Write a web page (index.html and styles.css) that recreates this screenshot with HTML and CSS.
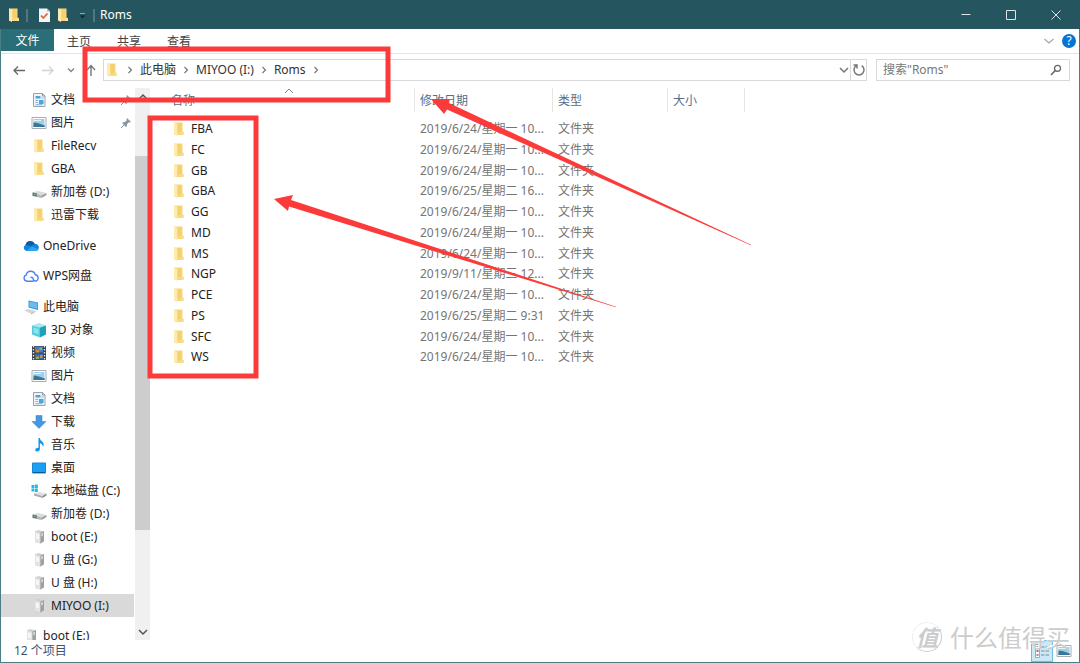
FILE: index.html
```
<!DOCTYPE html>
<html lang="zh-CN">
<head>
<meta charset="utf-8">
<title>Roms</title>
<link rel="stylesheet" href="styles.css">
</head>
<body>
<svg class="sprite" aria-hidden="true">
  <symbol id="folder" viewBox="0 0 16 16">
    <path d="M3 1.500h8.500v9l1.500.8v2.700H5L3 13.200z" fill="#f8d97f"/>
    <path d="M3 1.500 6 3v12L3 13.400z" fill="#fdebb0"/>
    <path d="M7 2h3.500v9H7z" fill="#f4d06e"/>
    <path d="M11 11.500h2V14h-2z" fill="#fbe29a"/>
  </symbol>
  <symbol id="doc" viewBox="0 0 16 16">
    <path d="M2.500 1.500h9l2.500 2.500v10.500H2.500z" fill="#f1f4f6" stroke="#9aa3a9"/>
    <path d="M11.500 1.500V4H14" fill="none" stroke="#8d979e"/>
    <path d="M4.500 4h5v2.500h-5zM8 8h4.500v4H8z" fill="#4ba6dc"/>
    <path d="M4.500 8.500h2.500M4.500 10.500h2.500M4.500 12.700h7M10.500 6h2" stroke="#7ab6dc"/>
  </symbol>
  <symbol id="picture" viewBox="0 0 16 16">
    <path d="M1 2.500h14v11H1z" fill="#fff" stroke="#a8aeb3"/>
    <path d="M2.500 4h11v8h-11z" fill="#9ccff0"/>
    <path d="M2.500 7.500q4 0 11 3V12h-11z" fill="#3d7a78"/>
    <path d="M2.500 10.500h11V12h-11z" fill="#3a72ae"/>
    <path d="M3 5.500h7" stroke="#e4f3fc"/>
  </symbol>
  <symbol id="drive" viewBox="0 0 16 16">
    <path d="M1 8.500 7 7l8.500 2-5 2.500z" fill="#dadbdc"/>
    <path d="M1 8.500V12l9.500 2v-2.500z" fill="#b4b7b9"/>
    <path d="M10.500 11.500V14l5-3V9z" fill="#989c9f"/>
    <path d="M2 8.500 6 9.400v3.100l-4-.8z" fill="#5d7580"/>
    <path d="M3 9.500h1.500V11H3z" fill="#69c27b"/>
    <path d="M4.500 10.500H6V12H4.500z" fill="#c5695b"/>
  </symbol>
  <symbol id="sysdrive" viewBox="0 0 16 16">
    <path d="M3 10.500 8 9l7.500 1.500-4 2.500z" fill="#dedfe0"/>
    <path d="M3 10.500v2l8.500 2.500v-2z" fill="#a8abad"/>
    <path d="M11.500 13v2l4-2.500v-2z" fill="#85898c"/>
    <path d="M.5 2h2.700v3H.5zM3.800 1.500h3V5h-3zM.5 5.600h2.700v3H.5zM3.800 5.600h3V9h-3z" fill="#1fb8ec"/>
  </symbol>
  <symbol id="usb" viewBox="0 0 16 16">
    <path d="M4 2.500 7 1.500l6 .8v10L9.500 14.500 4 13z" fill="#b2b5b7"/>
    <path d="M4 2.500 9.500 3.700v10.800L4 13z" fill="#e2e3e4"/>
    <path d="M4 2.500 7 1.500l6 .8-3.500 1.400z" fill="#cfd1d2"/>
    <path d="M9.500 3.700v10.800L13 12.300v-10z" fill="#9da1a3"/>
    <path d="M5 4.500 8 5.200v5L5 9.500z" fill="#f6f6f6"/>
    <path d="M10.200 4.500 12 3.800v3l-1.800.7z" fill="#d3d5d6"/>
  </symbol>
  <symbol id="onedrive" viewBox="0 0 16 16">
    <path d="M3.500 13A3.200 3.200 0 0 1 2.500 7Q3.500 3 7.500 3q2.700 0 4.200 2.700 3.300 0 4.100 3 .3 3.600-2.800 4.300z" fill="#1684d8"/>
    <path d="M2.500 7Q3.500 3 7.500 3q2.700 0 4.200 2.700L8 8z" fill="#0a5cab"/>
    <path d="M3.500 13 9 8.500l6.500 2.700Q14.500 13 13 13z" fill="#28a8ea"/>
  </symbol>
  <symbol id="wps" viewBox="0 0 16 16">
    <path d="M10 13.200H4A3.200 3.200 0 0 1 3.200 7a4.600 4.600 0 0 1 9-.3 3.300 3.300 0 0 1 1 6.300q-2.500.5-3-2-.2-1.700-2.200-1.700" fill="none" stroke="#4c83ee" stroke-width="1.400" stroke-linecap="round"/>
  </symbol>
  <symbol id="pc" viewBox="0 0 16 16">
    <path d="m5.500 1.500 9.500 2v7.500L5.500 8.500z" fill="#3c92cc"/>
    <path d="m6.300 2.500 8 1.700v5.600l-8-2z" fill="#68bdf0"/>
    <path d="M1 11.500 5.500 10l7 2L8 14.500z" fill="#d3d7da"/>
    <path d="m8 14.500 4.500-2.500v.800L8 15.500z" fill="#a0a6aa"/>
  </symbol>
  <symbol id="cube" viewBox="0 0 16 16">
    <path d="m1 3.500 7-2.500 7 2.500L9 5.500z" fill="#a6e9f3"/>
    <path d="m1 3.500 8 2v10L1 12.500z" fill="#55cbdc"/>
    <path d="m9 5.500 6-2v9l-6 3z" fill="#1fa1ba"/>
    <path d="m2.500 5.500 5 1.500v5.500l-5-2z" fill="#8be4ef"/>
  </symbol>
  <symbol id="video" viewBox="0 0 16 16">
    <path d="M1 1h14v14H1z" fill="#3b3f46"/>
    <path d="M2.500 1v14M13.500 1v14" stroke="#e0e2e4" stroke-width="1.400" stroke-dasharray="1.500 1.500"/>
    <path d="M4 1.500h8v6H4z" fill="#427fc8"/>
    <path d="M4 8.500h8v6H4z" fill="#3b67ae"/>
    <path d="M5 5h3v2.500H5zM9 10h2.500v3H9z" fill="#d98838"/>
    <path d="M8.500 2.500h2.500V5H8.500zM5 11.500h3V14H5z" fill="#89b457"/>
  </symbol>
  <symbol id="download" viewBox="0 0 16 16">
    <path d="M5 1.500h6v6h4L8 14.500 1 7.500h4z" fill="#4398e0" stroke="#2f82cc" stroke-width=".5"/>
  </symbol>
  <symbol id="music" viewBox="0 0 16 16">
    <path d="M7.500 1h1.300q.2 2.500 2.800 4 2.200 2.500.2 5 .3-2.700-2.900-3.700V12q-.2 2.500-2.700 2.600-2.200-.2-2-2 .4-2 3.300-1.900z" fill="#0f93ee"/>
  </symbol>
  <symbol id="desktop" viewBox="0 0 16 16">
    <path d="M1.500 3h13v10h-13z" fill="#18a0f4" stroke="#1b86d2"/>
    <path d="M2 12.500h12" stroke="#0d5d9d"/>
  </symbol>
  <symbol id="pin" viewBox="0 0 12 12">
    <path d="M7 1 11 5 9.800 5.500 8.800 5.300 7 7.300 6.800 9.500 6 10 2.300 6.200 3 5.300 5 5 6.800 3.200 6.500 2z" fill="#8a959e"/>
    <path d="M4 8 1 11" stroke="#8a959e"/>
  </symbol>
  <symbol id="right" viewBox="0 0 8 8"><path d="m2.500 1 3 3-3 3" fill="none" stroke="#777" stroke-width="1.200"/></symbol>
  <symbol id="down" viewBox="0 0 12 12"><path d="m2 4 4 4 4-4" fill="none" stroke="currentColor" stroke-width="1.500"/></symbol>
  <symbol id="up" viewBox="0 0 12 12"><path d="m2 8 4-4 4 4" fill="none" stroke="currentColor" stroke-width="1.500"/></symbol>
</svg>

<div class="window">
  <header class="titlebar">
    <svg class="icon title-folder"><use href="#folder"/></svg>
    <span class="divider"></span>
    <button class="quick" aria-label="属性">
      <svg class="icon" viewBox="0 0 16 16"><path d="M3 1.500h8l3 3v10.500H3z" fill="#f5f5f5"/><path d="M11 1.500v3h3z" fill="#b5bcc0"/><path d="m5 8.500 2.300 2.500 4.200-4.500" fill="none" stroke="#e0633d" stroke-width="1.800"/></svg>
    </button>
    <button class="quick" aria-label="新建文件夹"><svg class="icon"><use href="#folder"/></svg></button>
    <button class="quick" aria-label="自定义快速访问工具栏">
      <svg class="icon" viewBox="0 0 16 16"><path d="M6 6.500h5" stroke="#8fa7ac"/><path d="M5.800 8.500h5.400l-2.700 3z" fill="#10272c"/></svg>
    </button>
    <span class="divider"></span>
    <h1 class="title">Roms</h1>
    <div class="caption-buttons">
      <button aria-label="最小化"><svg viewBox="0 0 12 12"><path d="M1.500 5.500h9" stroke="#dbe5e7"/></svg></button>
      <button aria-label="最大化"><svg viewBox="0 0 12 12"><path d="M1.500 1.500h9v9h-9z" fill="none" stroke="#dbe5e7"/></svg></button>
      <button aria-label="关闭"><svg viewBox="0 0 12 12"><path d="m1.500 1.500 9 9m0-9-9 9" stroke="#dbe5e7"/></svg></button>
    </div>
  </header>

  <div class="ribbon">
    <button class="tab tab-file">文件</button>
    <button class="tab">主页</button>
    <button class="tab">共享</button>
    <button class="tab">查看</button>
    <div class="ribbon-tools">
      <button class="ribbon-expand" aria-label="展开功能区"><svg viewBox="0 0 12 12"><path d="m1.500 4 4.500 4 4.500-4" fill="none" stroke="#a6a6a6" stroke-width="1.200"/></svg></button>
      <button class="help" aria-label="帮助">?</button>
    </div>
  </div>

  <div class="toolbar">
    <div class="history">
      <button aria-label="后退"><svg class="arrow" viewBox="0 0 14 14"><path d="M13 7.500H2m4-4L2 7.500l4 4" fill="none" stroke="#666" stroke-width="1.300"/></svg></button>
      <button aria-label="前进"><svg class="arrow" viewBox="0 0 14 14"><path d="M1 7.500h11m-4-4 4 4-4 4" fill="none" stroke="#d2d2d2" stroke-width="1.300"/></svg></button>
      <button class="recent" aria-label="最近浏览的位置"><svg class="small" viewBox="0 0 12 12"><path d="m3 4.500 3 3 3-3" fill="none" stroke="#888" stroke-width="1.500"/></svg></button>
      <button class="parent" aria-label="上移"><svg class="arrow" viewBox="0 0 14 14"><path d="M7 13V3M3 7l4-4.500L11 7" fill="none" stroke="#777" stroke-width="1.400"/></svg></button>
    </div>
    <div class="address">
      <svg class="icon"><use href="#folder"/></svg>
      <svg class="sep"><use href="#right"/></svg>
      <button class="crumb">此电脑</button>
      <svg class="sep"><use href="#right"/></svg>
      <button class="crumb">MIYOO (I:)</button>
      <svg class="sep"><use href="#right"/></svg>
      <button class="crumb">Roms</button>
      <svg class="sep"><use href="#right"/></svg>
      <button class="address-drop" aria-label="以前的位置"><svg class="small"><use href="#down"/></svg></button>
      <button class="refresh" aria-label="刷新"><svg class="arrow" viewBox="0 0 14 14"><path d="M4.300 2.700a5 5 0 1 0 5.400 0M1.500 2h3.500v3.500" fill="none" stroke="#777" stroke-width="1.500"/></svg></button>
    </div>
    <label class="search">
      <input type="text" placeholder='搜索"Roms"' aria-label='搜索"Roms"'>
      <svg class="small" viewBox="0 0 12 12"><circle cx="7.500" cy="4.300" r="3" fill="none" stroke="#666" stroke-width="1.300"/><path d="M5.300 6.500 1 11" stroke="#666" stroke-width="1.600"/></svg>
    </label>
  </div>

  <div class="content">
    <nav class="sidebar" aria-label="导航窗格">
      <div class="group">
        <a class="item" href="#"><svg class="icon"><use href="#doc"/></svg>文档<svg class="pin"><use href="#pin"/></svg></a>
        <a class="item" href="#"><svg class="icon"><use href="#picture"/></svg>图片<svg class="pin"><use href="#pin"/></svg></a>
        <a class="item" href="#"><svg class="icon"><use href="#folder"/></svg>FileRecv</a>
        <a class="item" href="#"><svg class="icon"><use href="#folder"/></svg>GBA</a>
        <a class="item" href="#"><svg class="icon"><use href="#drive"/></svg>新加卷 (D:)</a>
        <a class="item" href="#"><svg class="icon"><use href="#folder"/></svg>迅雷下载</a>
      </div>
      <div class="group">
        <a class="item root" href="#"><svg class="icon"><use href="#onedrive"/></svg>OneDrive</a>
      </div>
      <div class="group tight">
        <a class="item root" href="#"><svg class="icon"><use href="#wps"/></svg>WPS网盘</a>
      </div>
      <div class="group">
        <a class="item root" href="#"><svg class="icon"><use href="#pc"/></svg>此电脑</a>
        <a class="item" href="#"><svg class="icon"><use href="#cube"/></svg>3D 对象</a>
        <a class="item" href="#"><svg class="icon"><use href="#video"/></svg>视频</a>
        <a class="item" href="#"><svg class="icon"><use href="#picture"/></svg>图片</a>
        <a class="item" href="#"><svg class="icon"><use href="#doc"/></svg>文档</a>
        <a class="item" href="#"><svg class="icon"><use href="#download"/></svg>下载</a>
        <a class="item" href="#"><svg class="icon"><use href="#music"/></svg>音乐</a>
        <a class="item" href="#"><svg class="icon"><use href="#desktop"/></svg>桌面</a>
        <a class="item" href="#"><svg class="icon"><use href="#sysdrive"/></svg>本地磁盘 (C:)</a>
        <a class="item" href="#"><svg class="icon"><use href="#drive"/></svg>新加卷 (D:)</a>
        <a class="item" href="#"><svg class="icon"><use href="#usb"/></svg>boot (E:)</a>
        <a class="item" href="#"><svg class="icon"><use href="#usb"/></svg>U 盘 (G:)</a>
        <a class="item" href="#"><svg class="icon"><use href="#usb"/></svg>U 盘 (H:)</a>
        <a class="item selected" href="#"><svg class="icon"><use href="#usb"/></svg>MIYOO (I:)</a>
      </div>
      <div class="group tight">
        <a class="item root" href="#"><svg class="icon"><use href="#usb"/></svg>boot (E:)</a>
      </div>
    </nav>
    <div class="scrollbar">
      <button aria-label="向上滚动"><svg class="small"><use href="#up"/></svg></button>
      <div class="track"><div class="thumb"></div></div>
      <button aria-label="向下滚动"><svg class="small"><use href="#down"/></svg></button>
    </div>
    <main class="files">
      <table>
        <colgroup><col class="col-name"><col class="col-date"><col class="col-type"><col class="col-size"></colgroup>
        <thead>
          <tr><th class="name">名称<svg class="sort" viewBox="0 0 12 6"><path d="M2 5 6 1l4 4" fill="none" stroke="#888"/></svg></th><th>修改日期</th><th>类型</th><th>大小</th></tr>
        </thead>
        <tbody>
          <tr><td class="name"><svg class="icon"><use href="#folder"/></svg>FBA</td><td>2019/6/24/星期一 10...</td><td>文件夹</td><td></td></tr>
          <tr><td class="name"><svg class="icon"><use href="#folder"/></svg>FC</td><td>2019/6/24/星期一 10...</td><td>文件夹</td><td></td></tr>
          <tr><td class="name"><svg class="icon"><use href="#folder"/></svg>GB</td><td>2019/6/24/星期一 10...</td><td>文件夹</td><td></td></tr>
          <tr><td class="name"><svg class="icon"><use href="#folder"/></svg>GBA</td><td>2019/6/25/星期二 16...</td><td>文件夹</td><td></td></tr>
          <tr><td class="name"><svg class="icon"><use href="#folder"/></svg>GG</td><td>2019/6/24/星期一 10...</td><td>文件夹</td><td></td></tr>
          <tr><td class="name"><svg class="icon"><use href="#folder"/></svg>MD</td><td>2019/6/24/星期一 10...</td><td>文件夹</td><td></td></tr>
          <tr><td class="name"><svg class="icon"><use href="#folder"/></svg>MS</td><td>2019/6/24/星期一 10...</td><td>文件夹</td><td></td></tr>
          <tr><td class="name"><svg class="icon"><use href="#folder"/></svg>NGP</td><td>2019/9/11/星期三 12...</td><td>文件夹</td><td></td></tr>
          <tr><td class="name"><svg class="icon"><use href="#folder"/></svg>PCE</td><td>2019/6/24/星期一 10...</td><td>文件夹</td><td></td></tr>
          <tr><td class="name"><svg class="icon"><use href="#folder"/></svg>PS</td><td>2019/6/25/星期二 9:31</td><td>文件夹</td><td></td></tr>
          <tr><td class="name"><svg class="icon"><use href="#folder"/></svg>SFC</td><td>2019/6/24/星期一 10...</td><td>文件夹</td><td></td></tr>
          <tr><td class="name"><svg class="icon"><use href="#folder"/></svg>WS</td><td>2019/6/24/星期一 10...</td><td>文件夹</td><td></td></tr>
        </tbody>
      </table>
    </main>
  </div>

  <footer class="statusbar">
    <span class="count">12 个项目</span>
    <div class="views">
      <button class="view active" aria-label="详细信息"><svg class="icon" viewBox="0 0 16 16"><path d="M1.500 1.500h4v13h-4z" fill="#fff" stroke="#a8a8a8"/><path d="M2.500 4h2m-2 8h2" stroke="#c0504d" stroke-width="1.500"/><path d="M2.500 8h2" stroke="#555" stroke-width="1.500"/><path d="M7 4h3.500M11.500 4H15M7 8h3.500M11.500 8H15M7 12h3.500M11.500 12H15" stroke="#7b8b96"/></svg></button>
      <button class="view" aria-label="大图标"><svg class="icon"><use href="#picture"/></svg></button>
    </div>
  </footer>
</div>

<div class="watermark"><span class="seal">值</span><span>什么值得买</span></div>

<svg class="annotations" width="760" height="400" aria-hidden="true">
  <g fill="none" stroke="#fc3a3a" stroke-width="5">
    <rect x="85" y="49" width="303" height="51"/>
    <rect x="150" y="118" width="106" height="258"/>
  </g>
  <g fill="#fc3a3a">
    <path d="M431 99 450 99 449 103 751 244.800 750.800 245.300 447 109.500 444 114z"/>
    <path d="M274 199 293 195 291 200 616 306.700 615.800 307.200 289 206.500 288 211z"/>
  </g>
</svg>
</body>
</html>
```

FILE: styles.css
```
* {
  box-sizing: border-box;
}

body {
  margin: 0;
  position: relative;
  font: 12px/20px "Noto Sans", "Noto Sans CJK SC", sans-serif;
  color: #222;
  background: #fff;
  overflow: hidden;
}

button,
input {
  margin: 0;
  padding: 0;
  border: 0;
  background: none;
  font: inherit;
  color: inherit;
}

button {
  display: flex;
  align-items: center;
  justify-content: center;
}

svg {
  flex: none;
}

.sprite {
  position: absolute;
  width: 0;
  height: 0;
}

.icon {
  width: 16px;
  height: 16px;
}

.arrow {
  width: 14px;
  height: 14px;
}

.small,
.pin {
  width: 12px;
  height: 12px;
}

.window {
  display: flex;
  flex-direction: column;
  height: 100vh;
  border: solid #4b7d85;
  border-width: 0 1px 1px;
}

/* Title bar */
.titlebar {
  display: flex;
  align-items: center;
  height: 29px;
  flex: none;
  margin: 0 -1px;
  padding: 1px 0 0 6px;
  background: #255660;
  color: #fff;
}

.divider {
  width: 2px;
  height: 13px;
  background: #4f7780;
}

.title-folder {
  margin-right: 4px;
}

.quick {
  margin-left: 3px;
}

.quick:first-of-type {
  margin-left: 8px;
}

.quick + .divider {
  margin-left: 3px;
}

.title {
  margin: 0 0 0 5px;
  font-size: 12px;
  font-weight: 400;
}

.caption-buttons {
  display: flex;
  margin-left: auto;
  padding-right: 2px;
}

.caption-buttons button {
  width: 45px;
  height: 28px;
}

.caption-buttons svg {
  width: 12px;
  height: 12px;
}

/* Ribbon tabs */
.ribbon {
  display: flex;
  flex: none;
  height: 25px;
  border-bottom: 1px solid #e4e4e4;
}

.tab {
  width: 50px;
  height: 24px;
  padding-top: 1px;
  color: #444;
}

.tab-file {
  width: 53px;
  height: 22px;
  padding-top: 2px;
  background: #2a6e78;
  color: #fff;
}

.ribbon-tools {
  display: flex;
  align-items: center;
  gap: 7px;
  margin-left: auto;
  padding-right: 3px;
}

.ribbon-expand svg {
  width: 12px;
  height: 12px;
}

.help {
  width: 14px;
  height: 14px;
  border-radius: 50%;
  background: #0873d6;
  color: #fff;
  line-height: 14px;
}

/* Navigation and address bar */
.toolbar {
  display: flex;
  align-items: center;
  flex: none;
  height: 34px;
  padding: 0 9px 2px 11px;
}

.history {
  display: flex;
  align-items: center;
  gap: 15px;
  width: 91px;
}

.recent {
  margin-left: -5px;
}

.parent {
  margin-left: -8px;
}

.address {
  display: flex;
  align-items: center;
  flex: 1;
  height: 22px;
  border: 1px solid #d9d9d9;
  color: #333;
}

.sep {
  width: 8px;
  height: 8px;
  margin: 0 6px;
}

.address-drop {
  width: 13px;
  height: 20px;
  margin-left: auto;
  color: #777;
}

.refresh {
  width: 16px;
  height: 20px;
  border-left: 1px solid #d9d9d9;
}

.search {
  display: flex;
  align-items: center;
  width: 194px;
  height: 22px;
  margin-left: 9px;
  padding: 0 7px 0 6px;
  border: 1px solid #d9d9d9;
}

.search input {
  flex: 1;
  min-width: 0;
  outline: 0;
}

.search input::placeholder {
  color: #777;
  opacity: 1;
}

/* Navigation pane */
.content {
  display: flex;
  flex: 1;
  min-height: 0;
}

.sidebar {
  width: 133px;
  flex: none;
  overflow: hidden;
}

.group + .group {
  margin-top: 8px;
}

.group + .tight {
  margin-top: 7px;
}

.item {
  display: flex;
  align-items: center;
  gap: 4px;
  height: 23px;
  padding-left: 30px;
  color: inherit;
  text-decoration: none;
  white-space: nowrap;
}

.root {
  padding-left: 22px;
}

.selected {
  background: #d9d9d9;
}

.pin {
  margin: 0 2px 0 auto;
}

.scrollbar {
  display: flex;
  flex-direction: column;
  width: 15px;
  flex: none;
  margin-left: 1px;
  background: #f0f0f0;
  color: #555;
}

.scrollbar button {
  height: 17px;
}

.track {
  flex: 1;
  padding-top: 51px;
}

.thumb {
  height: 80%;
  background: #cdcdcd;
}

/* File list */
.files {
  flex: 1;
  min-width: 0;
  overflow: hidden;
}

table {
  table-layout: fixed;
  width: 595px;
  border-spacing: 0;
}

.col-name {
  width: 265px;
}

.col-date {
  width: 138px;
}

.col-type {
  width: 115px;
}

.col-size {
  width: 77px;
}

th,
td {
  padding: 0 0 0 5px;
  text-align: left;
  white-space: nowrap;
}

th {
  position: relative;
  height: 24px;
  padding-top: 1px;
  border-right: 1px solid #e5e5e5;
  font-weight: 400;
  color: #5a6d86;
}

th.name {
  padding-left: 21px;
}

.sort {
  position: absolute;
  left: 133px;
  top: 0;
  width: 12px;
  height: 6px;
}

tbody::before {
  content: "";
  display: table-row;
  height: 6px;
}

td {
  height: 21px;
  color: #757575;
}

tr:nth-child(4n) td {
  height: 20px;
}

td.name {
  display: flex;
  align-items: center;
  gap: 4px;
  padding-left: 21px;
  color: #222;
}

/* Status bar */
.statusbar {
  display: flex;
  align-items: center;
  justify-content: space-between;
  flex: none;
  height: 22px;
  padding: 0 4px 0 13px;
  color: #3d5273;
}

.views {
  display: flex;
}

.view {
  width: 22px;
  height: 22px;
}

.view.active {
  border: 1px solid #66bfe8;
  background: #cce8f6;
}

.watermark {
  position: absolute;
  right: 10px;
  bottom: 10px;
  display: flex;
  align-items: center;
  gap: 8px;
  font: 24px/32px "Noto Sans CJK SC", sans-serif;
  color: #ccc;
  text-shadow: -1px -1px #fff;
}

.seal {
  width: 30px;
  height: 30px;
  border: 1px solid;
  border-color: #f0f0f0 #ccc #ccc #f0f0f0;
  border-radius: 50%;
  font-size: 22px;
  font-style: italic;
  font-weight: 700;
  text-align: center;
  line-height: 26px;
}

.annotations {
  position: absolute;
  left: 0;
  top: 0;
  pointer-events: none;
}
```
